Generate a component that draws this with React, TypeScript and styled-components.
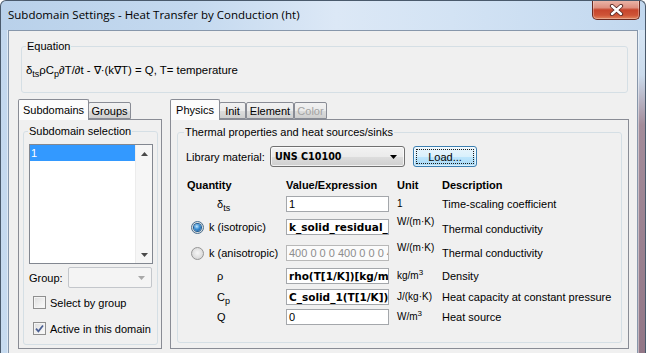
import React from "react";
import styled, { createGlobalStyle } from "styled-components";

const GlobalStyle = createGlobalStyle`
  html, body { margin: 0; padding: 0; }
  body {
    width: 646px;
    height: 353px;
    overflow: hidden;
    background: #ffffff;
    font-family: "Liberation Sans", Arial, sans-serif;
    font-size: 11px;
    color: #000;
  }
  *, *::before, *::after { box-sizing: border-box; }
`;

const Window = styled.div`
  width: 646px;
  height: 353px;
  overflow: hidden;
  display: flex;
  flex-direction: column;
  border: 1px solid #4a5a6c;
  border-bottom: 0;
  border-radius: 6px 6px 0 0;
  background: linear-gradient(
    to right,
    #b9d1ea 0%,
    #c4d9ef 30%,
    #dce8f6 52%,
    #d3e3f4 70%,
    #c2d8ef 100%
  );
`;

const TitleBar = styled.div`
  height: 29px;
  flex: none;
  display: flex;
  align-items: flex-start;
  justify-content: space-between;
  padding-left: 7px;
`;

const Title = styled.div`
  font-family: "Open Sans", "Noto Sans", sans-serif;
  font-size: 11.5px;
  line-height: 28px;
  color: #000;
  white-space: nowrap;
`;

const CloseButton = styled.div`
  width: 48px;
  height: 20px;
  margin-top: -1px;
  margin-right: 5px;
  border: 1px solid #6b2a20;
  border-top: 0;
  border-radius: 0 0 5px 5px;
  background: linear-gradient(
    to bottom,
    #ecb9ac 0%,
    #de9080 40%,
    #c7452c 52%,
    #cf5437 80%,
    #e2865f 100%
  );
  box-shadow: inset 0 0 0 1px rgba(255, 255, 255, 0.3);
  display: flex;
  align-items: center;
  justify-content: center;
`;

const Body = styled.div`
  flex: 1;
  min-height: 0;
  display: flex;
`;

const Frame = styled.div<{ $side: "left" | "right" }>`
  width: 7px;
  flex: none;
  background: ${(p) =>
    p.$side === "left"
      ? "linear-gradient(to bottom, #c2d7ee, #c7dbf0)"
      : "linear-gradient(to bottom, #d6e5f4 0px, #cbdbec 45px, #a38c9a 95px, #927787 100%)"};
  box-shadow: ${(p) =>
    p.$side === "left"
      ? "inset -1px 0 0 #dfeaf6"
      : "inset 1px 0 0 rgba(255,255,255,0.45)"};
`;

const Client = styled.div`
  width: 630px;
  flex: none;
  border: 1px solid #8797ab;
  border-bottom: 0;
  background: #f0f0f0;
  padding: 8px 8px 0 9px;
  display: flex;
  flex-direction: column;
`;

const GroupBox = styled.fieldset<{ $padL: number; $h?: number }>`
  margin: 0;
  min-width: 0;
  border: 1px solid #d5dfe5;
  border-radius: 3px;
  padding: 0 4px 0 ${(p) => p.$padL}px;
  ${(p) => (p.$h ? `height: ${p.$h}px; flex: none;` : "flex: 1;")}
  display: flex;
  flex-direction: column;
`;

const Legend = styled.legend<{ $x: number }>`
  padding: 0 1px;
  margin-left: ${(p) => p.$x}px;
  line-height: 14px;
  font-size: 11px;
  color: #000;
`;

const EquationBox = styled(GroupBox)`
  margin: 0 1px 0 3px;
`;

const EqText = styled.div`
  margin-top: 10px;
  line-height: 14px;
  font-size: 11.4px;
  white-space: nowrap;
`;

const Sub = styled.sub`
  font-size: 9px;
  line-height: 0;
  vertical-align: -3px;
`;

const Sup = styled.sup`
  font-size: 8px;
  line-height: 0;
  vertical-align: 4px;
`;

const TabsRow = styled.div`
  margin-top: 6px;
  height: 250px;
  flex: none;
  display: flex;
  gap: 8px;
`;

const TabControl = styled.div<{ $w: number }>`
  width: ${(p) => p.$w}px;
  flex: none;
  display: flex;
  flex-direction: column;
`;

const TabStrip = styled.div`
  height: 20px;
  flex: none;
  display: flex;
  align-items: flex-end;
`;

const Tab = styled.div<{ $w: number; $active?: boolean; $disabled?: boolean; $ml?: number }>`
  position: relative;
  width: ${(p) => p.$w}px;
  margin-left: ${(p) => p.$ml ?? 0}px;
  height: ${(p) => (p.$active ? 21 : 17)}px;
  margin-bottom: ${(p) => (p.$active ? -1 : 0)}px;
  z-index: ${(p) => (p.$active ? 2 : 1)};
  border: 1px solid #898c95;
  border-bottom: ${(p) => (p.$active ? "0" : "1px solid #898c95")};
  border-radius: 2px 2px 0 0;
  background: ${(p) =>
    p.$active
      ? "#fcfcfc"
      : "linear-gradient(to bottom, #f2f2f2 0%, #ebebeb 50%, #dddddd 51%, #cfcfcf 100%)"};
  color: ${(p) => (p.$disabled ? "#a3a3a3" : "#000")};
  display: flex;
  justify-content: center;
  align-items: ${(p) => (p.$active ? "flex-start" : "center")};
  padding-top: ${(p) => (p.$active ? 3 : 0)}px;
  line-height: 14px;
  white-space: nowrap;
`;

const TabPanel = styled.div`
  flex: 1;
  border: 1px solid #898c95;
  background: #f0f0f0;
  display: flex;
  flex-direction: column;
  position: relative;
  z-index: 1;
`;

const LeftGroup = styled(GroupBox)`
  margin: 4px 3px 3px 4px;
`;

const RightGroup = styled(GroupBox)`
  margin: 5px 6px 5px 6px;
`;

const ListBox = styled.div`
  width: 124px;
  height: 120px;
  flex: none;
  margin-top: 6px;
  border: 1px solid #828790;
  background: #fff;
  display: flex;
`;

const ListItems = styled.div`
  flex: 1;
`;

const ListItem = styled.div<{ $selected?: boolean }>`
  height: 16px;
  line-height: 16px;
  padding-left: 1px;
  background: ${(p) => (p.$selected ? "#3399ff" : "transparent")};
  color: ${(p) => (p.$selected ? "#fff" : "#000")};
`;

const ScrollBar = styled.div`
  width: 17px;
  flex: none;
  background: #f6f6f6;
  border-left: 1px solid #ececec;
  display: flex;
  flex-direction: column;
  justify-content: space-between;
`;

const ScrollArrow = styled.div`
  height: 17px;
  display: flex;
  align-items: center;
  justify-content: center;
`;

const FieldRow = styled.div`
  margin-top: 3px;
  height: 21px;
  flex: none;
  display: flex;
  align-items: center;
`;

const FieldLabel = styled.span<{ $w: number }>`
  width: ${(p) => p.$w}px;
  flex: none;
  white-space: nowrap;
`;

const ComboBox = styled.div<{ $w: number }>`
  width: ${(p) => p.$w}px;
  height: 21px;
  flex: none;
  border: 1px solid #c3c6cb;
  border-radius: 2px;
  background: #f4f4f4;
  display: flex;
  align-items: center;
  justify-content: flex-end;
  padding-right: 6px;
`;

const CheckRow = styled.label<{ $mt: number }>`
  margin-top: ${(p) => p.$mt}px;
  margin-left: 4px;
  height: 13px;
  flex: none;
  display: flex;
  align-items: center;
  gap: 4px;
  white-space: nowrap;
`;

const CheckBox = styled.span`
  width: 13px;
  height: 13px;
  flex: none;
  border: 1px solid #8f8f8f;
  background: linear-gradient(135deg, #dcdcdc 0%, #f0f0f0 60%, #fbfbfb 100%);
  box-shadow: inset 0 0 0 1px #f4f4f4;
  display: flex;
  align-items: center;
  justify-content: center;
`;

const LibraryRow = styled.div`
  margin-top: 7px;
  height: 21px;
  flex: none;
  display: flex;
  align-items: center;
`;

const SelectBox = styled.div`
  width: 135px;
  height: 21px;
  flex: none;
  border: 1px solid #707070;
  border-radius: 3px;
  background: linear-gradient(to bottom, #f2f2f2 0%, #ebebeb 50%, #dddddd 51%, #cfcfcf 100%);
  box-shadow: inset 0 0 0 1px rgba(255, 255, 255, 0.7);
  display: flex;
  align-items: center;
  justify-content: space-between;
  padding: 0 7px 0 4px;
  font-family: "DejaVu Sans", Verdana, sans-serif;
  font-weight: bold;
  font-size: 9.6px;
`;

const Button = styled.div`
  margin-left: 8px;
  width: 64px;
  height: 21px;
  flex: none;
  border: 1px solid #3c7fb1;
  border-radius: 3px;
  background: linear-gradient(to bottom, #eaf6fd 0%, #d9f0fc 50%, #bee6fd 51%, #a7d9f5 100%);
  box-shadow: inset 0 0 0 1px rgba(255, 255, 255, 0.6);
  padding: 2px;
  display: flex;
`;

const FocusRect = styled.div`
  flex: 1;
  border: 1px dotted #1a1a1a;
  display: flex;
  align-items: center;
  justify-content: center;
  line-height: 14px;
`;

const PropGrid = styled.div`
  margin-top: 12px;
  margin-left: 1px;
  display: grid;
  grid-template-columns: 99px 111px 45px 1fr;
  grid-template-rows: 17px 23px 26px 23px 21px 20px 20px;
  align-items: start;
  white-space: nowrap;
`;

const HeaderCell = styled.div`
  font-weight: bold;
  line-height: 12px;
`;

const QuantityCell = styled.div<{ $radio?: boolean }>`
  height: 16px;
  line-height: 16px;
  display: flex;
  align-items: center;
  gap: 5px;
  padding-left: ${(p) => (p.$radio ? 4 : 30)}px;
`;

const Radio = styled.span<{ $checked?: boolean }>`
  width: 13px;
  height: 13px;
  flex: none;
  border-radius: 50%;
  border: 1px solid ${(p) => (p.$checked ? "#4a6f8f" : "#959595")};
  background: radial-gradient(circle at 50% 45%, #f6f6f6 0%, #e0e0e0 55%, #cdcdcd 100%);
  display: flex;
  align-items: center;
  justify-content: center;
  &::after {
    content: "";
    display: ${(p) => (p.$checked ? "block" : "none")};
    width: 7px;
    height: 7px;
    border-radius: 50%;
    background: radial-gradient(circle at 40% 35%, #c4e8fc 0%, #3a8fd6 45%, #0f4d8a 100%);
    box-shadow: 0 0 0 1px #1d5c93;
  }
`;

const ValueBox = styled.div<{ $bold?: boolean; $disabled?: boolean }>`
  width: 103px;
  height: 16px;
  border: 1px solid ${(p) => (p.$disabled ? "#b8b8b8" : "#a4a7ab")};
  padding: 0 2px;
  background: ${(p) => (p.$disabled ? "#fbfbfb" : "#fff")};
  overflow: hidden;
  white-space: nowrap;
  line-height: 14px;
  font-family: ${(p) =>
    p.$bold ? `"DejaVu Sans", Verdana, sans-serif` : `"Liberation Sans", Arial, sans-serif`};
  font-size: ${(p) => (p.$bold ? 10.5 : 11)}px;
  font-weight: ${(p) => (p.$bold ? "bold" : "normal")};
  color: ${(p) => (p.$disabled ? "#8d8d8d" : "#000")};
`;

const UnitCell = styled.div<{ $raise?: boolean }>`
  line-height: 16px;
  font-size: 10px;
  margin-top: ${(p) => (p.$raise ? -5 : 0)}px;
  overflow: visible;
`;

const DescCell = styled.div<{ $dy?: number }>`
  line-height: 16px;
  margin-top: ${(p) => p.$dy ?? 0}px;
`;

const CloseGlyph = () => (
  <svg width="15" height="12" viewBox="0 0 15 12">
    <path d="M3 2 L12 10 M12 2 L3 10" stroke="#5a2a24" strokeWidth="4.2" strokeLinecap="round" />
    <path d="M3 2 L12 10 M12 2 L3 10" stroke="#ffffff" strokeWidth="2.4" strokeLinecap="round" />
  </svg>
);

const Triangle = ({ dir, color }: { dir: "up" | "down"; color: string }) => (
  <svg width="7" height="4" viewBox="0 0 7 4">
    <path d={dir === "up" ? "M0 4 L3.5 0 L7 4 Z" : "M0 0 L7 0 L3.5 4 Z"} fill={color} />
  </svg>
);

const CheckMark = () => (
  <svg width="9" height="9" viewBox="0 0 9 9">
    <path d="M1 4.6 L3.4 7.3 L8 1.4" stroke="#4a5f93" strokeWidth="1.7" fill="none" />
  </svg>
);

type Row = {
  quantity: React.ReactNode;
  radio?: "on" | "off";
  value: string;
  bold?: boolean;
  disabled?: boolean;
  unit: React.ReactNode;
  raise?: boolean;
  desc: string;
  dy?: number;
};

const rows: Row[] = [
  {
    quantity: (
      <span>
        δ<Sub>ts</Sub>
      </span>
    ),
    value: "1",
    unit: "1",
    desc: "Time-scaling coefficient",
  },
  {
    quantity: "k (isotropic)",
    radio: "on",
    value: "k_solid_residual_resistivity(T[1/K])[W/(m*K)]",
    bold: true,
    unit: "W/(m·K)",
    raise: true,
    desc: "Thermal conductivity",
    dy: 2,
  },
  {
    quantity: "k (anisotropic)",
    radio: "off",
    value: "400 0 0 0 400 0 0 0 400",
    disabled: true,
    unit: "W/(m·K)",
    raise: true,
    desc: "Thermal conductivity",
  },
  {
    quantity: "ρ",
    value: "rho(T[1/K])[kg/m^3]",
    bold: true,
    unit: (
      <span>
        kg/m<Sup>3</Sup>
      </span>
    ),
    desc: "Density",
  },
  {
    quantity: (
      <span>
        C<Sub>p</Sub>
      </span>
    ),
    value: "C_solid_1(T[1/K])[J/(kg*K)]",
    bold: true,
    unit: "J/(kg·K)",
    desc: "Heat capacity at constant pressure",
  },
  {
    quantity: "Q",
    value: "0",
    unit: (
      <span>
        W/m<Sup>3</Sup>
      </span>
    ),
    desc: "Heat source",
  },
];

export default function App() {
  return (
    <>
      <GlobalStyle />
      <Window>
        <TitleBar>
          <Title>Subdomain Settings - Heat Transfer by Conduction (ht)</Title>
          <CloseButton>
            <CloseGlyph />
          </CloseButton>
        </TitleBar>
        <Body>
          <Frame $side="left" />
          <Client>
            <EquationBox $padL={4} $h={54}>
              <Legend $x={0}>Equation</Legend>
              <EqText>
                δ<Sub>ts</Sub>ρC<Sub>p</Sub>∂T/∂t - ∇·(k∇T) = Q, T= temperature
              </EqText>
            </EquationBox>
            <TabsRow>
              <TabControl $w={144}>
                <TabStrip>
                  <Tab $w={71} $active>
                    Subdomains
                  </Tab>
                  <Tab $w={43} $ml={-1}>
                    Groups
                  </Tab>
                </TabStrip>
                <TabPanel>
                  <LeftGroup $padL={5}>
                    <Legend $x={-1}>Subdomain selection</Legend>
                    <ListBox>
                      <ListItems>
                        <ListItem $selected>1</ListItem>
                      </ListItems>
                      <ScrollBar>
                        <ScrollArrow>
                          <Triangle dir="up" color="#4a4a4a" />
                        </ScrollArrow>
                        <ScrollArrow>
                          <Triangle dir="down" color="#4a4a4a" />
                        </ScrollArrow>
                      </ScrollBar>
                    </ListBox>
                    <FieldRow>
                      <FieldLabel $w={39}>Group:</FieldLabel>
                      <ComboBox $w={84}>
                        <Triangle dir="down" color="#a8a8a8" />
                      </ComboBox>
                    </FieldRow>
                    <CheckRow $mt={8}>
                      <CheckBox />
                      Select by group
                    </CheckRow>
                    <CheckRow $mt={13}>
                      <CheckBox>
                        <CheckMark />
                      </CheckBox>
                      Active in this domain
                    </CheckRow>
                  </LeftGroup>
                </TabPanel>
              </TabControl>
              <TabControl $w={459}>
                <TabStrip>
                  <Tab $w={50} $active>
                    Physics
                  </Tab>
                  <Tab $w={27} $ml={-1}>
                    Init
                  </Tab>
                  <Tab $w={48}>Element</Tab>
                  <Tab $w={33} $disabled>
                    Color
                  </Tab>
                </TabStrip>
                <TabPanel>
                  <RightGroup $padL={8}>
                    <Legend $x={-2}>Thermal properties and heat sources/sinks</Legend>
                    <LibraryRow>
                      <FieldLabel $w={84}>Library material:</FieldLabel>
                      <SelectBox>
                        <span>UNS C10100</span>
                        <Triangle dir="down" color="#000" />
                      </SelectBox>
                      <Button>
                        <FocusRect>Load...</FocusRect>
                      </Button>
                    </LibraryRow>
                    <PropGrid>
                      <HeaderCell>Quantity</HeaderCell>
                      <HeaderCell>Value/Expression</HeaderCell>
                      <HeaderCell>Unit</HeaderCell>
                      <HeaderCell>Description</HeaderCell>
                      {rows.map((r, i) => (
                        <React.Fragment key={i}>
                          <QuantityCell $radio={!!r.radio}>
                            {r.radio && <Radio $checked={r.radio === "on"} />}
                            {r.quantity}
                          </QuantityCell>
                          <ValueBox $bold={r.bold} $disabled={r.disabled}>
                            {r.value}
                          </ValueBox>
                          <UnitCell $raise={r.raise}>{r.unit}</UnitCell>
                          <DescCell $dy={r.dy}>{r.desc}</DescCell>
                        </React.Fragment>
                      ))}
                    </PropGrid>
                  </RightGroup>
                </TabPanel>
              </TabControl>
            </TabsRow>
          </Client>
          <Frame $side="right" />
        </Body>
      </Window>
    </>
  );
}
